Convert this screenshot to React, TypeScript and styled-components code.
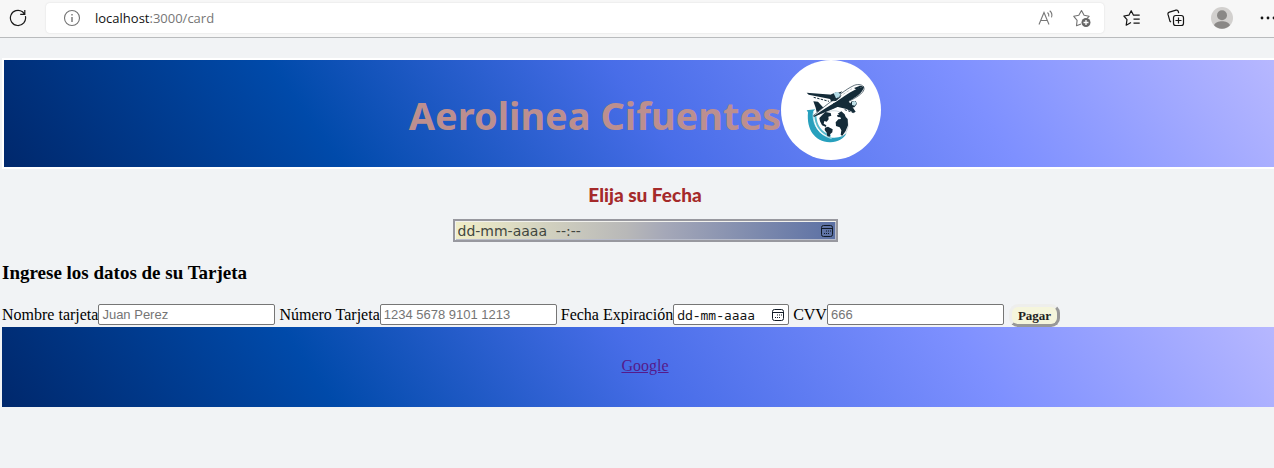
import React from "react";
import styled, { createGlobalStyle } from "styled-components";

const GlobalStyle = createGlobalStyle`
  * { box-sizing: border-box; }
  html { background: #f1f3f5; }
  body { margin: 0; overflow-x: hidden; font-family: "Liberation Serif", serif; font-size: 16px; color: #000; }
`;

const gradient =
  "linear-gradient(55deg, #00286c 0%, #004aaa 25%, #486de8 50%, #7e90ff 75%, #b9b9ff 100%)";

const Toolbar = styled.nav`
  display: flex;
  align-items: flex-start;
  height: 38px;
  padding-top: 3px;
  overflow: hidden;
  background: #f7f7f7;
  border-bottom: 1px solid #b9bbbd;
`;

const IconButton = styled.button<{ $width: number }>`
  display: flex;
  flex: none;
  align-items: center;
  justify-content: center;
  width: ${(p) => p.$width}px;
  height: 30px;
  padding: 0;
  border: 0;
  background: none;
`;

const AddressBar = styled.div`
  display: flex;
  flex: 1;
  align-items: center;
  height: 30px;
  margin-left: 10px;
  padding: 0 4px 0 8px;
  background: #fff;
  border-radius: 4px;
  box-shadow: 0 0 2px rgba(0, 0, 0, 0.12);
`;

const Url = styled.span`
  flex: 1;
  margin-left: 5px;
  font: 13px/20px "Open Sans", "Noto Sans", sans-serif;
  color: #767676;
`;

const Host = styled.span`
  color: #111;
`;

const Actions = styled.div`
  display: flex;
  flex: none;
  width: 170px;
  padding-left: 6px;
`;

const Viewport = styled.div`
  overflow: hidden;
`;

const Page = styled.main`
  margin: 20px -14px 0 2px;
`;

const Banner = styled.header`
  display: flex;
  justify-content: center;
  align-items: flex-start;
  height: 111px;
  border: 2px solid #fff;
  background: ${gradient};
`;

const Title = styled.h1`
  margin: 0;
  padding-top: 27px;
  font: bold 38px/56px "Noto Sans", "Open Sans", sans-serif;
  color: rosybrown;
`;

const Logo = styled.svg`
  flex: none;
  width: 100px;
  height: 100px;
  border-radius: 50%;
  background: #fff;
`;

const Schedule = styled.section`
  display: flex;
  flex-direction: column;
  align-items: center;
  padding-top: 14px;
`;

const ScheduleLabel = styled.label`
  margin-bottom: 12px;
  font: 900 19px/24px Lato, sans-serif;
  color: #a52a2a;
`;

const PickerBox = styled.div<{ $wide?: boolean }>`
  display: flex;
  align-items: center;
  width: ${(p) => (p.$wide ? 385 : 116)}px;
  height: ${(p) => (p.$wide ? 23 : 21)}px;
  padding: 0 ${(p) => (p.$wide ? 3 : 4)}px 0 3px;
  border: ${(p) => (p.$wide ? "2px solid #98989f" : "1px solid #767676")};
  border-radius: ${(p) => (p.$wide ? 0 : 2)}px;
  background: ${(p) =>
    p.$wide ? "linear-gradient(to right, #f0eec8, #b8b8b8 45%, #a5a8b8 55%, #5b70a4)" : "#fff"};
  box-shadow: ${(p) => (p.$wide ? "inset 1px 1px 0 #f2f2ee, inset -1px -1px 0 #b8bccb" : "none")};
`;

const PickerInput = styled.input<{ $wide?: boolean }>`
  flex: 1;
  min-width: 0;
  padding: 0;
  border: 0;
  outline: 0;
  background: none;
  font: ${(p) =>
    p.$wide ? '14px/18px "DejaVu Sans", sans-serif' : '13px/16px "Noto Sans Mono", "DejaVu Sans Mono", monospace'};
  &::placeholder {
    color: ${(p) => (p.$wide ? "#41463f" : "#111")};
    opacity: 1;
  }
`;

const PickerButton = styled.button`
  display: flex;
  padding: 0;
  border: 0;
  background: none;
`;

const SectionTitle = styled.h3`
  margin: 20px 0;
  font-size: 19px;
  line-height: 22px;
`;

const CardForm = styled.form`
  display: flex;
  align-items: flex-start;
  gap: 4px;
  height: 23px;
`;

const Field = styled.div`
  display: flex;
  flex: none;
  align-items: center;
  height: 21px;
`;

const TextInput = styled.input`
  width: 177px;
  height: 21px;
  padding: 1px 3px;
  border: 1px solid #767676;
  border-radius: 2px;
  background: #fff;
  font: 13px/16px "Liberation Sans", sans-serif;
  &::placeholder {
    color: #757575;
    opacity: 1;
  }
`;

const PayButton = styled.button`
  flex: none;
  height: 23px;
  margin-left: 1px;
  padding: 0 6px;
  border: 3px solid;
  border-color: #eeeeec #989898 #989898 #eeeeec;
  border-radius: 9px;
  background: beige;
  font: bold 13px/16px "Liberation Serif", serif;
  color: #222;
`;

const Footer = styled.footer`
  display: flex;
  justify-content: center;
  padding: 30px 0 32px;
  background: ${gradient};
  line-height: 18px;
`;

const FooterLink = styled.a`
  color: #551a8b;
`;

function Calendar() {
  return (
    <svg width="12" height="12" viewBox="0 0 12 12" fill="none" stroke="#111a25" aria-hidden="true">
      <rect x=".5" y=".5" width="11" height="11" rx="2" />
      <path d="M1 3.5h10" />
      <path d="M5 6h1M7 6h1M9 6h1M3 8.5h1M5 8.5h1M7 8.5h1" strokeWidth="1.2" />
    </svg>
  );
}

function PlaneLogo() {
  return (
    <Logo viewBox="27 30 300 300" role="img" aria-label="Aerolinea Cifuentes">
      <path d="M104 181l26-3-6 5c-3 40 14 76 56 80 22 2 36-6 44-13-10 17-28 28-51 27-45-2-70-38-65-90z" fill="#27a0bd" />
      <path d="M130 194c0 31 17 56 46 64" fill="none" stroke="#57b9cd" strokeWidth="6" />
      <path d="M123 190c-1 38 20 66 56 76" fill="none" stroke="#e2f7f8" strokeWidth="2" />
      <path d="M145 199c14-13 33-19 49-16 22 5 36 25 34 47-2 14-9 25-20 32" fill="none" stroke="#9db2bb" strokeWidth="1.5" />
      <path d="M142 204l18-18 16 3 2 8-9 3 1 8-6 7-7-2-2 8 8 5-1 5-12-5-6-12z" fill="#142b38" />
      <path d="M159 233l9-3 14 8-1 9-6 5-2 8-7-1-2-11-6-8z" fill="#142b38" />
      <path d="M197 191l11-7 10 9 3 8 6 6 1 19-7 17-10 14-5-2 2-14-5-9-11-4-1-11 8-9 8-1-2-5-8-1-2-6 7-1z" fill="#142b38" />
      <path d="M124 154l14 1 17 19-21 13-3-14z" fill="#142b38" />
      <path d="M104 128l77 6 30-10-22 26-26-5-53-11z" fill="#142b38" />
      <path d="M125 196c14-10 28-24 45-36 23-17 51-43 77-54 12-5 27-2 29 8 2 12-16 24-34 34-35 18-73 34-117 51z" fill="#fff" stroke="#142b38" strokeWidth="2" />
      <path d="M126 198c36-25 64-41 84-55 20-13 44-28 66-34-1 15-17 28-34 38-39 22-79 38-116 53z" fill="#142b38" />
      <path d="M183 160l44-11 24 36-5 3-23-11-34-8z" fill="#142b38" />
      <path d="M174 146l4-13 15-6 12 5 1 9-14 12-15 1z" fill="#142b38" />
      <path d="M185 130l10-5 10 7-3 10-10 3z" fill="#b4dce7" />
      <path d="M231 166l8-12 12-1 4 8-8 11-12 1z" fill="#142b38" />
      <path d="M240 155l9-2 5 7-6 7-8-2z" fill="#c0e1e8" />
      <path d="M246 114l18-7 9 2-19 10z" fill="#142b38" />
      <path d="M179 155l61-39" stroke="#54636a" strokeWidth="2" strokeDasharray="2 3" />
      <path d="M125 142l46 12M218 179l27 9" stroke="#142b38" strokeWidth="3" strokeDasharray="7 4" />
    </Logo>
  );
}

export default function App() {
  return (
    <>
      <GlobalStyle />
      <Toolbar>
        <IconButton $width={36} aria-label="Actualizar">
          <svg width="18" height="18" viewBox="0 0 18 18" fill="none" stroke="#1b1b1b" strokeWidth="1.2">
            <path d="M16.4 7.2A7.6 7.6 0 1 1 13.5 2.8L15.6 5M15.8 1v4.4h-4.6" />
          </svg>
        </IconButton>
        <AddressBar>
          <IconButton $width={36} aria-label="Información del sitio">
            <svg width="18" height="18" viewBox="0 0 18 18" fill="none" stroke="#737373" strokeWidth="1.1">
              <circle cx="9" cy="9" r="7.5" />
              <path d="M9 8v5M9 5v1.5" strokeWidth="1.4" />
            </svg>
          </IconButton>
          <Url>
            <Host>localhost</Host>:3000/card
          </Url>
          <IconButton $width={36} aria-label="Leer en voz alta">
            <svg width="18" height="18" viewBox="0 0 18 18" fill="none" stroke="#777" strokeWidth="1.1">
              <path d="M2 15.5L7 3.5l5 12M3.8 11.5h6.4M10.5 3.5c1.2 1 1.6 2.4 1.2 4M12.7 1.8c2.2 1.8 2.7 4 1.8 6.6" />
            </svg>
          </IconButton>
          <IconButton $width={36} aria-label="Agregar a favoritos">
            <svg width="18" height="18" viewBox="0 0 18 18" fill="none" stroke="#737373" strokeWidth="1.1" strokeLinejoin="round">
              <path d="M8 15l-4.5 1.8.6-5.4L.8 7.3l5-1L8.5 1.6l2.6 4.7 5 1-2 2" />
              <circle cx="13" cy="13.5" r="4.5" fill="#666" stroke="none" />
              <path d="M13 11v5M10.5 13.5h5" stroke="#fff" strokeWidth="1.3" />
            </svg>
          </IconButton>
        </AddressBar>
        <Actions>
          <IconButton $width={44} aria-label="Favoritos">
            <svg width="18" height="18" viewBox="0 0 18 18" fill="none" stroke="#151515" strokeWidth="1.2" strokeLinejoin="round">
              <path d="M8 13.5l-4.8 2.7.8-5.6L.9 7l5-.8L8.2 1.7l2.3 4.5h6.2M10.5 10.2h6.2M10.5 14.2h6.2" />
            </svg>
          </IconButton>
          <IconButton $width={44} aria-label="Colecciones">
            <svg width="18" height="18" viewBox="0 0 18 18" fill="none" stroke="#151515" strokeWidth="1.2">
              <path d="M4 13l-1-.7L1 5.4c-.3-1.2.3-2 1.4-2.3L9 1.2c1.2-.3 2 .1 2.3 1.3l.4 1.7" />
              <rect x="6.5" y="6.5" width="10" height="10" rx="2.3" />
              <path d="M11.5 8.5v6M8.5 11.5h6" />
            </svg>
          </IconButton>
          <IconButton $width={48} aria-label="Perfil">
            <svg width="22" height="22" viewBox="0 0 22 22">
              <circle cx="11" cy="11" r="11" fill="#d2d0ce" />
              <circle cx="11" cy="8.2" r="5" fill="#8a8886" />
              <path d="M3 18.3c2-5.3 14-5.3 16 0a11 11 0 0 1-16 0z" fill="#8a8886" />
            </svg>
          </IconButton>
          <IconButton $width={44} aria-label="Más opciones">
            <svg width="16" height="4" viewBox="0 0 16 4" fill="#151515">
              <circle cx="2" cy="2" r="1.4" />
              <circle cx="8" cy="2" r="1.4" />
              <circle cx="14" cy="2" r="1.4" />
            </svg>
          </IconButton>
        </Actions>
      </Toolbar>
      <Viewport>
        <Page>
          <Banner>
            <Title>Aerolinea Cifuentes</Title>
            <PlaneLogo />
          </Banner>
          <Schedule>
            <ScheduleLabel htmlFor="fecha">Elija su Fecha</ScheduleLabel>
            <PickerBox $wide>
              <PickerInput $wide id="fecha" placeholder="dd-mm-aaaa  --:--" />
              <PickerButton type="button" aria-label="Abrir calendario">
                <Calendar />
              </PickerButton>
            </PickerBox>
          </Schedule>
          <SectionTitle>Ingrese los datos de su Tarjeta</SectionTitle>
          <CardForm onSubmit={(e) => e.preventDefault()}>
            <Field>
              <label htmlFor="nombre">Nombre tarjeta</label>
              <TextInput id="nombre" placeholder="Juan Perez" />
            </Field>
            <Field>
              <label htmlFor="numero">Número Tarjeta</label>
              <TextInput id="numero" placeholder="1234 5678 9101 1213" />
            </Field>
            <Field>
              <label htmlFor="expiracion">Fecha Expiración</label>
              <PickerBox>
                <PickerInput id="expiracion" placeholder="dd-mm-aaaa" />
                <PickerButton type="button" aria-label="Abrir calendario">
                  <Calendar />
                </PickerButton>
              </PickerBox>
            </Field>
            <Field>
              <label htmlFor="cvv">CVV</label>
              <TextInput id="cvv" placeholder="666" />
            </Field>
            <PayButton type="submit">Pagar</PayButton>
          </CardForm>
          <Footer>
            <FooterLink href="https://www.google.com">Google</FooterLink>
          </Footer>
        </Page>
      </Viewport>
    </>
  );
}
